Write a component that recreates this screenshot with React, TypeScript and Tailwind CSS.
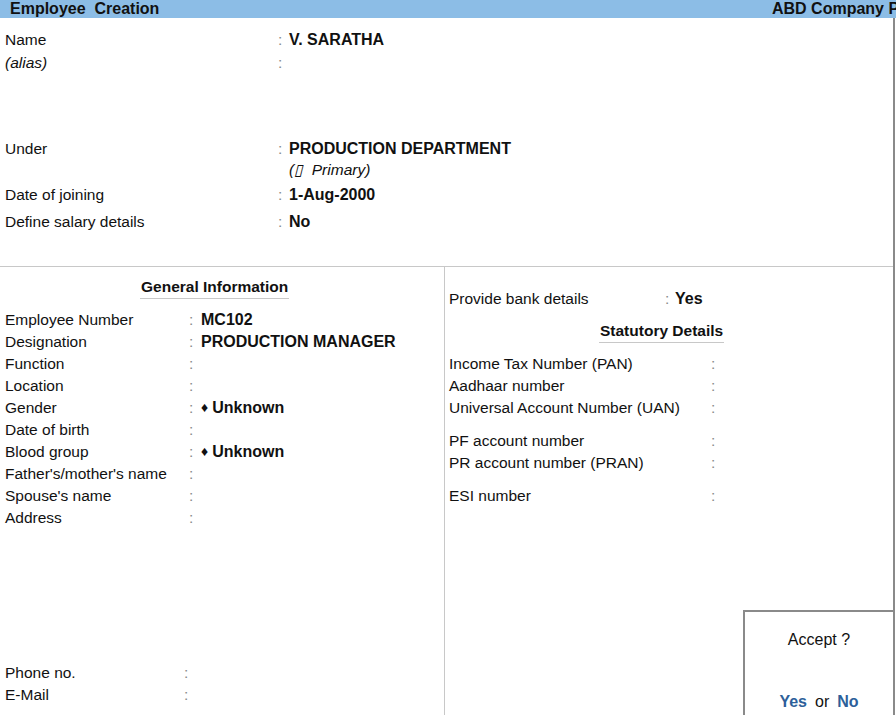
type Row = { label: string; value?: string; diamond?: boolean; gap?: boolean };

const generalRows: Row[] = [
   { label: "Employee Number", value: "MC102" },
   { label: "Designation", value: "PRODUCTION MANAGER" },
   { label: "Function" },
   { label: "Location" },
   { label: "Gender", value: "Unknown", diamond: true },
   { label: "Date of birth" },
   { label: "Blood group", value: "Unknown", diamond: true },
   { label: "Father's/mother's name" },
   { label: "Spouse's name" },
   { label: "Address" },
];

const statutoryRows: Row[] = [
   { label: "Income Tax Number (PAN)" },
   { label: "Aadhaar number" },
   { label: "Universal Account Number (UAN)" },
   { label: "PF account number", gap: true },
   { label: "PR account number (PRAN)" },
   { label: "ESI number", gap: true },
];

function Colon() {
   return <span className="text-[#8a8a8a]">:</span>;
}

function Field({ row, labelW }: { row: Row; labelW: string }) {
   return (
      <div className={`flex h-[22px] items-center ${row.gap ? "mt-[11px]" : ""}`}>
         <div className={`${labelW} shrink-0 whitespace-nowrap`}>{row.label}</div>
         <div className="w-[12px] shrink-0">
            <Colon />
         </div>
         {row.value && (
            <div className="font-bold text-[16px] whitespace-nowrap">
               {row.diamond && <span className="text-[14px] mr-[4px] relative -top-[1px]">♦</span>}
               {row.value}
            </div>
         )}
      </div>
   );
}

export default function App() {
   return (
      <div
         className="relative w-[896px] h-[715px] overflow-hidden bg-white text-[#111111] text-[15.5px] leading-[22px]"
         style={{ fontFamily: '"Liberation Sans", Arial, sans-serif' }}
      >
         {/* title bar */}
         <div className="flex h-[18px] items-center justify-between bg-[#8cbde6] font-bold text-[16px] leading-[18px]">
            <div className="pl-[10px] whitespace-pre">Employee  Creation</div>
            <div className="w-[124px] overflow-hidden whitespace-nowrap">ABD Company Pvt. Ltd.</div>
         </div>

         <div className="w-[895px] h-[697px] border-r-2 border-[#8a8a8a]">
            {/* top section */}
            <div className="h-[249px] border-b border-[#c8c8c8] pt-[11px]">
               <div className="flex h-[22px] items-center">
                  <div className="w-[278px] pl-[5px]">Name</div>
                  <div className="w-[11px]"><Colon /></div>
                  <div className="font-bold text-[16px]">V. SARATHA</div>
               </div>
               <div className="flex h-[22px] items-center mt-[1px]">
                  <div className="w-[278px] pl-[5px] italic">(alias)</div>
                  <div className="w-[11px]"><Colon /></div>
               </div>

               <div className="flex h-[22px] items-center mt-[64px]">
                  <div className="w-[278px] pl-[5px]">Under</div>
                  <div className="w-[11px]"><Colon /></div>
                  <div className="font-bold text-[16px]">PRODUCTION DEPARTMENT</div>
               </div>
               <div className="flex h-[22px] items-center -mt-[1px] pl-[289px] italic">
                  (▯&nbsp; Primary)
               </div>
               <div className="flex h-[22px] items-center mt-[3px]">
                  <div className="w-[278px] pl-[5px]">Date of joining</div>
                  <div className="w-[11px]"><Colon /></div>
                  <div className="font-bold text-[16px]">1-Aug-2000</div>
               </div>
               <div className="flex h-[22px] items-center mt-[5px]">
                  <div className="w-[278px] pl-[5px]">Define salary details</div>
                  <div className="w-[11px]"><Colon /></div>
                  <div className="font-bold text-[16px]">No</div>
               </div>
            </div>

            {/* bottom section */}
            <div className="flex h-[448px]">
               {/* general information */}
               <div className="w-[445px] border-r border-[#c8c8c8] pt-[9px] pl-[5px]">
                  <div className="ml-[135px] inline-block border-b border-[#c8c8c8] px-[1px] font-bold">
                     General Information
                  </div>
                  <div className="mt-[10px]">
                     {generalRows.map((r, i) => (
                        <Field key={i} row={r} labelW="w-[184px]" />
                     ))}
                  </div>
                  <div className="mt-[133px]">
                     <Field row={{ label: "Phone no." }} labelW="w-[179px]" />
                     <Field row={{ label: "E-Mail" }} labelW="w-[179px]" />
                  </div>
               </div>

               {/* bank / statutory */}
               <div className="flex-1 pt-[21px] pl-[4px]">
                  <div className="flex h-[22px] items-center">
                     <div className="w-[216px]">Provide bank details</div>
                     <div className="w-[10px]"><Colon /></div>
                     <div className="font-bold text-[16px]">Yes</div>
                  </div>
                  <div className="mt-[10px] ml-[150px] inline-block border-b border-[#c8c8c8] px-[1px] font-bold">
                     Statutory Details
                  </div>
                  <div className="mt-[10px]">
                     {statutoryRows.map((r, i) => (
                        <Field key={i} row={r} labelW="w-[262px]" />
                     ))}
                  </div>
               </div>
            </div>
         </div>

         {/* accept prompt */}
         <div className="absolute left-[743px] top-[610px] w-[152px] h-[110px] border-2 border-[#8a8a8a] bg-white text-center text-[16px]">
            <div className="mt-[17px]">Accept ?</div>
            <div className="mt-[40px]">
               <span className="font-bold text-[#2d5f9a]">Yes</span>
               <span className="mx-[8px]">or</span>
               <span className="font-bold text-[#2d5f9a]">No</span>
            </div>
         </div>
      </div>
   );
}
